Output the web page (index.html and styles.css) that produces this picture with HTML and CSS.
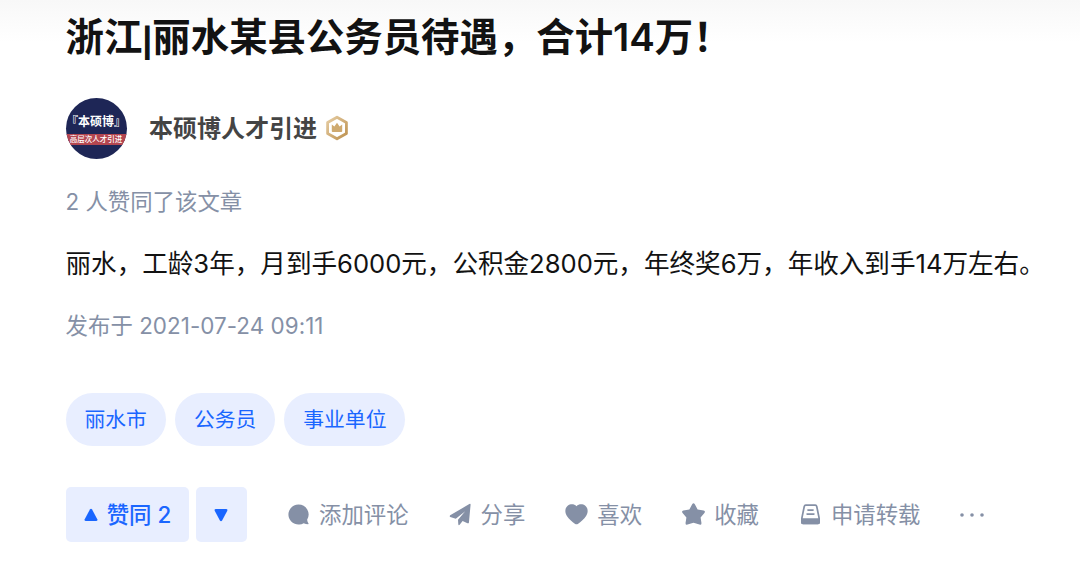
FILE: index.html
```html
<!DOCTYPE html>
<html lang="zh-CN">
<head>
    <meta charset="UTF-8">
    <title>浙江|丽水某县公务员待遇，合计14万！</title>
    <link rel="stylesheet" href="styles.css">
</head>
<body>
    <article class="post">
        <h1 class="title">浙江<span class="bar">|</span>丽水某县公务员待遇，合计14万！</h1>

        <div class="author">
            <div class="avatar">
                <span class="avatar-name">『本硕博』</span>
                <span class="avatar-band">高层次人才引进</span>
            </div>
            <span class="author-name">本硕博人才引进</span>
            <svg class="badge" viewBox="0 0 24 26">
                <defs>
                    <linearGradient id="gold" x1="0" y1="0" x2="1" y2="1">
                        <stop offset="0" stop-color="#e6cda4"/>
                        <stop offset="1" stop-color="#bd914f"/>
                    </linearGradient>
                </defs>
                <path d="M12 2.2 21.4 7.5V18.5L12 23.8 2.6 18.5V7.5Z" fill="none" stroke="url(#gold)" stroke-width="2.8" stroke-linejoin="round"/>
                <path d="M6.8 9.4 9.4 11.4 12 7.8 14.6 11.4 17.2 9.4V16.2Q17.2 17 16.4 17H7.6Q6.8 17 6.8 16.2Z" fill="#cfaa70"/>
            </svg>
        </div>

        <p class="voters">2 人赞同了该文章</p>
        <p class="content">丽水，工龄3年，月到手6000元，公积金2800元，年终奖6万，年收入到手14万左右。</p>
        <p class="time">发布于 2021-07-24 09:11</p>

        <div class="tags">
            <a class="tag">丽水市</a>
            <a class="tag">公务员</a>
            <a class="tag">事业单位</a>
        </div>

        <div class="actions">
            <button class="vote vote-up">
                <svg class="triangle" viewBox="0 0 14 14"><path d="M5.9 1.5Q7 0 8.1 1.5L13.3 11.2Q14 13 12.3 13H1.7Q0 13 .7 11.2Z"/></svg>
                赞同 2
            </button>
            <button class="vote vote-down">
                <svg class="triangle" viewBox="0 0 14 14"><path d="M5.9 12.5Q7 14 8.1 12.5L13.3 2.8Q14 1 12.3 1H1.7Q0 1 .7 2.8Z"/></svg>
            </button>
            <button class="action comment">
                <svg class="icon" viewBox="0 0 24 24"><path d="M12 1.5A10.5 10.5 0 1 0 17.4 21Q19.6 22.2 22 22.2 22.9 22 22.3 21.1 21.3 19.5 21 17.4A10.5 10.5 0 0 0 12 1.5Z"/></svg>
                添加评论
            </button>
            <button class="action share">
                <svg class="icon" viewBox="0 0 24 24"><path d="M1.2 12.9 21.2 1.1Q22.7.4 22.5 2L20.8 20.3Q20.6 21.6 19.3 21L14.2 18.9 11.1 22.8Q10 23.9 9.7 22.3L9.4 17.4 16.9 8.6 7.1 16.4 1.3 14.5Q.3 13.8 1.2 12.9Z"/></svg>
                分享
            </button>
            <button class="action like">
                <svg class="icon" viewBox="0 0 24 24"><path d="M12 3.3C14.4.8 18.4.7 21.2 2.8 24.3 5.5 24.3 10 22 13.5 20 16.6 16.6 19.6 13.4 21.8Q12 22.8 10.6 21.8C7.4 19.6 4 16.6 2 13.5-.3 10-.3 5.5 2.8 2.8 5.6.7 9.6.8 12 3.3Z"/></svg>
                喜欢
            </button>
            <button class="action collect">
                <svg class="icon" viewBox="0 0 24 24"><path d="M10.6 1.2Q12-.6 13.4 1.2L16.3 6.8 22.6 7.9Q24.8 8.5 23.4 10.4L19.4 15 20.3 20.9Q20.4 23.2 18.2 22.5L12 20.7 5.8 22.5Q3.6 23.2 3.7 20.9L4.6 15 .6 10.4Q-.8 8.5 1.4 7.9L7.7 6.8Z"/></svg>
                收藏
            </button>
            <button class="action reprint">
                <svg class="icon" viewBox="0 0 24 24"><path d="M7 2.3H17Q18.2 2.3 18.5 3.5L21 15.8V20.2Q21 21.4 19.8 21.4H4.2Q3 21.4 3 20.2V15.8L5.5 3.5Q5.8 2.3 7 2.3Z" fill="none" stroke="currentColor" stroke-width="1.8"/><path d="M2.1 16H21.9V20.4Q21.9 22.3 20 22.3H4Q2.1 22.3 2.1 20.4Z"/><path d="M9.3 7.4H14.7M8.4 11.6H15.6" fill="none" stroke="currentColor" stroke-width="1.7" stroke-linecap="round"/></svg>
                申请转载
            </button>
            <button class="action more">
                <svg class="dots" viewBox="0 0 24 4"><circle cx="2" cy="2" r="1.8"/><circle cx="12" cy="2" r="1.8"/><circle cx="22" cy="2" r="1.8"/></svg>
            </button>
        </div>
    </article>
</body>
</html>
```

FILE: styles.css
```css
* {
    margin: 0;
    padding: 0;
    box-sizing: border-box;
}
body {
    background: linear-gradient(#f8f8f8, #fff 42px);
    background-repeat: no-repeat;
    font-family: Inter, "Noto Sans CJK SC", sans-serif;
    color: #121212;
}
.post {
    padding: 10px 0 0 65.5px;
    white-space: nowrap;
}
.title {
    font-size: 38.4px;
    font-weight: 600;
    line-height: 54px;
}
.bar {
    font-size: 28px;
    line-height: 1;
    vertical-align: -1.5px;
    -webkit-text-stroke: 1.2px #121212;
}

/* author */
.author {
    display: flex;
    align-items: center;
    margin-top: 34px;
    height: 61px;
}
.avatar {
    display: flex;
    flex-direction: column;
    align-items: center;
    width: 61px;
    height: 61px;
    padding-top: 15px;
    border-radius: 50%;
    background: #1e2656;
    color: #fff;
    overflow: hidden;
}
.avatar-name {
    font-size: 12px;
    font-weight: 600;
    line-height: 18px;
}
.avatar-band {
    width: 61px;
    margin-top: 3px;
    background: #b44650;
    font-size: 7.5px;
    font-weight: 500;
    line-height: 11px;
    text-align: center;
}
.author-name {
    margin-left: 22.5px;
    padding-bottom: 5px;
    font-size: 24px;
    font-weight: 600;
    color: #444;
}
.badge {
    width: 24px;
    height: 26px;
    margin: 0 0 2px 7.5px;
}

/* text */
.voters {
    margin-top: 25px;
    font-size: 22.4px;
    line-height: 36px;
    color: #8590a6;
}
.content {
    margin-top: 24px;
    font-size: 25.6px;
    line-height: 40px;
    letter-spacing: -0.02px;
}
.time {
    margin-top: 24px;
    font-size: 22.4px;
    line-height: 36px;
    letter-spacing: 0.05px;
    color: #8590a6;
}

/* tags */
.tags {
    display: flex;
    gap: 9px;
    margin-top: 49px;
}
.tag {
    height: 53px;
    padding: 0 19px;
    border-radius: 27px;
    background: #e8eeff;
    color: #1a66ff;
    font-size: 20.8px;
    line-height: 53px;
}

/* bottom bar */
.actions {
    display: flex;
    align-items: center;
    margin-top: 41px;
}
button {
    display: flex;
    align-items: center;
    border: none;
    background: none;
    font-family: inherit;
    font-size: 22.4px;
    line-height: 36px;
    white-space: nowrap;
    cursor: pointer;
}
svg {
    flex: none;
    fill: currentColor;
}
.vote {
    justify-content: center;
    height: 55px;
    border-radius: 5px;
    background: #e8eeff;
    color: #1a66ff;
}
.vote-up {
    width: 123px;
    padding-left: 1px;
    gap: 9px;
    font-weight: 500;
}
.vote-down {
    width: 51px;
    margin-left: 7px;
}
.triangle {
    width: 14px;
    height: 14px;
}
.action {
    gap: 9px;
    margin-left: 40px;
    color: #8590a6;
}
.comment {
    margin-left: 40.5px;
}
.icon {
    width: 23px;
    height: 23px;
}
.dots {
    width: 24px;
    height: 4px;
}
```
